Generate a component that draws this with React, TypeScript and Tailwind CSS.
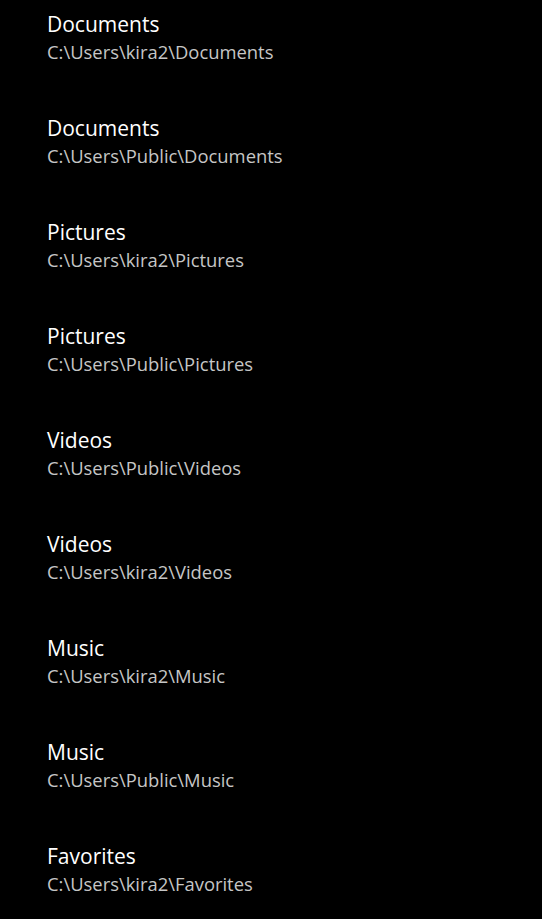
const items = [
  { name: "Documents", path: "C:\\Users\\kira2\\Documents" },
  { name: "Documents", path: "C:\\Users\\Public\\Documents" },
  { name: "Pictures", path: "C:\\Users\\kira2\\Pictures" },
  { name: "Pictures", path: "C:\\Users\\Public\\Pictures" },
  { name: "Videos", path: "C:\\Users\\Public\\Videos" },
  { name: "Videos", path: "C:\\Users\\kira2\\Videos" },
  { name: "Music", path: "C:\\Users\\kira2\\Music" },
  { name: "Music", path: "C:\\Users\\Public\\Music" },
  { name: "Favorites", path: "C:\\Users\\kira2\\Favorites" },
]

export default function App() {
  return (
    <div className="h-[919px] w-[542px] overflow-hidden bg-black font-['Open_Sans',sans-serif]">
      <ul className="flex flex-col pl-[47px]">
        {items.map((item, i) => (
          <li key={i} className="flex h-[104px] flex-col pt-[10px]">
            <span className="text-[21px] leading-[28px] text-white">{item.name}</span>
            <span className="text-[18.4px] leading-[28px] text-[#c6c6c6]">{item.path}</span>
          </li>
        ))}
      </ul>
    </div>
  )
}
